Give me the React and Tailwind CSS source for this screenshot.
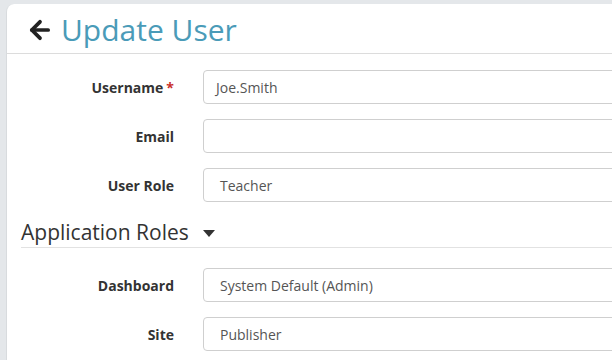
import { ArrowLeft } from "lucide-react";

const inputCls =
  "h-[34px] w-[460px] rounded-[4px] border border-[#cfcfcf] bg-white text-[14px] text-[#555] flex items-center";

function Row({ label, required, value, select }) {
  return (
    <div className="flex items-center">
      <label className="w-[167px] text-right text-[14px] font-bold text-[#333]">
        {label}
        {required && <span className="ml-[3px] text-[#c9302c]">*</span>}
      </label>
      <div className={`${inputCls} ml-[29px] ${select ? "pl-[16px]" : "pl-[12px]"}`}>
        {value}
      </div>
    </div>
  );
}

export default function App() {
  return (
    <div
      className="h-[360px] w-[612px] overflow-hidden bg-[#e4e7ea] pl-[6px] pt-[4px]"
      style={{ fontFamily: '"Open Sans", "Liberation Sans", sans-serif' }}
    >
      <div className="h-[400px] w-[700px] rounded-tl-[8px] border-l border-[#d8dbde] bg-white">
        <div className="flex h-[50px] items-center border-b border-[#dcdcdc] pl-[19px] pt-[2px]">
          <ArrowLeft size={28} strokeWidth={3.2} className="text-[#222]" />
          <h1 className="ml-[7px] text-[30px] leading-none text-[#4a9bb8]">
            Update User
          </h1>
        </div>

        <div className="flex flex-col gap-[15px] pt-[16px]">
          <Row label="Username" required value="Joe.Smith" />
          <Row label="Email" value="" />
          <Row label="User Role" value="Teacher" select />
        </div>

        <div className="ml-[14px] mt-[20px] flex items-center border-b border-[#e2e2e2] pb-[4px]">
          <h2 className="text-[21px] leading-none text-[#333]">Application Roles</h2>
          <svg width="14" height="8" viewBox="0 0 14 8" className="ml-[13px] mt-[2px]">
            <path d="M1 0 L13 0 L7 7 Z" fill="#333" />
          </svg>
        </div>

        <div className="flex flex-col gap-[15px] pt-[20px]">
          <Row label="Dashboard" value="System Default (Admin)" select />
          <Row label="Site" value="Publisher" select />
        </div>
      </div>
    </div>
  );
}
